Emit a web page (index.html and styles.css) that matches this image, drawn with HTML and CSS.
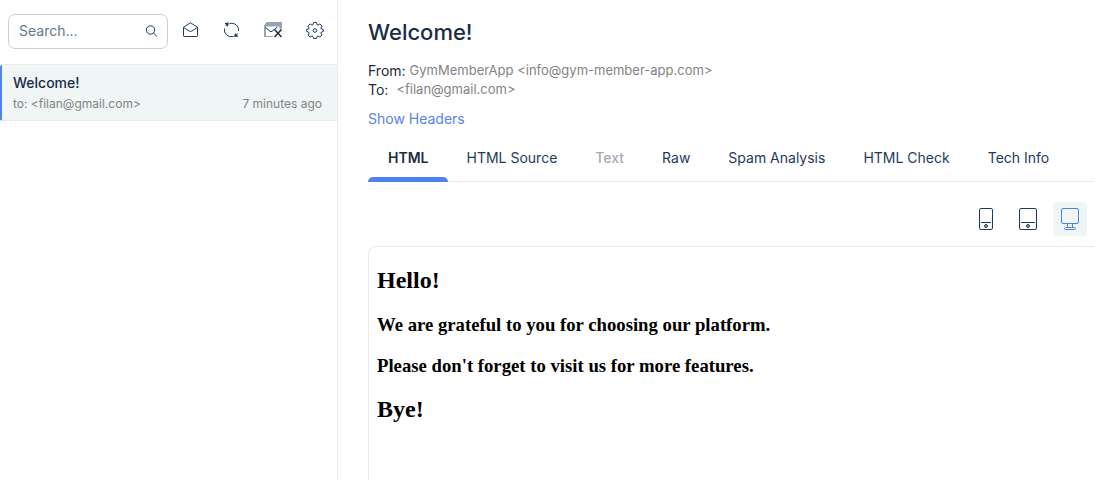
FILE: index.html
```html
<!DOCTYPE html>
<html lang="en">
<head>
<meta charset="utf-8">
<title>Inbox</title>
<link rel="stylesheet" href="styles.css">
</head>
<body>
<div class="app">
  <aside class="sidebar">
    <div class="toolbar">
      <label class="search">
        <input class="search-input" type="text" placeholder="Search..." aria-label="Search">
        <svg class="search-icon" width="14" height="14" viewBox="0 0 14 14"><circle cx="6.500" cy="6" r="4.200"/><path d="M9.500 9l3.500 3.700"/></svg>
      </label>
      <div class="actions">
        <button class="action" aria-label="Mark all as read">
          <svg width="18" height="18" viewBox="0 0 18 18"><path d="M1.500 6.200L8.500 1.800l7 4.400v8.600q0 .7-.7.7H2.200q-.7 0-.7-.7zM1.800 6.600L7 10q1.500.9 3 0l5.200-3.400"/></svg>
        </button>
        <button class="action" aria-label="Refresh">
          <svg width="18" height="18" viewBox="0 0 18 18"><path d="M6.500 2.700A6.800 6.800 0 0 1 15.500 10M1.500 7.500A6.800 6.800 0 0 0 10.500 15.300M2.500 5A6.800 6.800 0 0 1 4 3.500M14.500 12.500A6.800 6.800 0 0 1 13 14.500"/><path class="solid" d="M1.500 2L5.800 1.500 5 5.800zM15.500 15.500L11.200 16 12 12z"/></svg>
        </button>
        <button class="action" aria-label="Delete all">
          <svg width="20" height="18" viewBox="0 0 20 18"><path class="shade" d="M3.500 1H19V7L16.500 9V5.500H4L1 7V4.500z"/><path class="muted" d="M1.500 15.500h8.500"/><path class="shade" d="M1 6h2v10H1z"/><path d="M2.500 6.500L7 10.300q1 .7 2 0L14.500 6"/><path class="bold" d="M11.500 8.500l7 7.500M18.500 8.500l-7 7.500"/></svg>
        </button>
        <button class="action" aria-label="Settings">
          <svg width="18" height="18" viewBox="0 0 18 18"><path d="M7.500 1.500h3l.5 2.200 1 .4 1.900-1.200 2.100 2.200L14.900 7l.4 1 2 .5v2l-2 .6-.4 1 1.100 1.900-2.100 2.100-1.900-1.100-1 .4-.5 2.100h-3L7 15.400 6 15l-1.900 1.100L2 14l1.100-1.900-.4-1-2-.6v-2l2-.5.4-1L2 5.100l2.100-2.200L6 4.100l1-.4z"/><circle cx="9" cy="9.500" r="1.800"/></svg>
        </button>
      </div>
    </div>
    <a class="message" href="#message">
      <span class="message-subject">Welcome!</span>
      <span class="message-meta"><span>to: &lt;filan@gmail.com&gt;</span><time>7 minutes ago</time></span>
    </a>
  </aside>
  <main class="main" id="message">
    <h1 class="subject">Welcome!</h1>
    <div class="addresses">
      <div class="address"><span class="address-label">From:</span><span class="address-value">GymMemberApp &lt;info@gym-member-app.com&gt;</span></div>
      <div class="address address-to"><span class="address-label">To:</span><span class="address-value">&lt;filan@gmail.com&gt;</span></div>
    </div>
    <a class="headers-link" href="#headers">Show Headers</a>
    <div class="tabs" role="tablist">
      <button class="tab active" role="tab" aria-selected="true">HTML</button>
      <button class="tab" role="tab">HTML Source</button>
      <button class="tab" role="tab" disabled>Text</button>
      <button class="tab" role="tab">Raw</button>
      <button class="tab" role="tab">Spam Analysis</button>
      <button class="tab" role="tab">HTML Check</button>
      <button class="tab" role="tab">Tech Info</button>
    </div>
    <div class="devices">
      <button class="device" aria-label="Mobile view"><svg width="24" height="24" viewBox="0 0 24 24"><rect x="5.500" y="1.500" width="13" height="21" rx="1.500"/><path d="M7 15.500h10"/><circle class="dot" cx="12" cy="19" r="1.500"/></svg></button>
      <button class="device" aria-label="Tablet view"><svg width="24" height="24" viewBox="0 0 24 24"><rect x="3.500" y="1.500" width="17" height="21" rx="1.500"/><path d="M5 15.500h14"/><circle class="dot" cx="12" cy="19" r="1.500"/></svg></button>
      <button class="device selected" aria-label="Desktop view"><svg width="24" height="24" viewBox="0 0 24 24"><rect x="3.500" y="1.500" width="17" height="15" rx="1.500"/><path d="M9.500 17v3M14.500 17v3"/><rect x="6.500" y="20.500" width="11" height="2" rx="1"/></svg></button>
    </div>
    <article class="email">
      <h2>Hello!</h2>
      <h3>We are grateful to you for choosing our platform.</h3>
      <h3>Please don't forget to visit us for more features.</h3>
      <h2>Bye!</h2>
    </article>
  </main>
</div>
</body>
</html>
```
FILE: styles.css
```css
* { box-sizing: border-box; }
body {
  margin: 0;
  background: #fff;
  color: #1c2b42;
  font: 14px/20px Inter, "Liberation Sans", sans-serif;
}
button {
  border: 0;
  background: none;
  color: inherit;
  font: inherit;
  cursor: pointer;
}
a { color: inherit; text-decoration: none; }
svg {
  display: block;
  fill: none;
  stroke: #1f3a5c;
  stroke-width: 1;
}
.app { display: flex; min-height: 100vh; }

.sidebar { flex: 0 0 338px; border-right: 1px solid #ebebeb; }
.toolbar {
  display: flex;
  align-items: center;
  gap: 14px;
  height: 65px;
  padding: 0 13px 2px 8px;
  border-bottom: 1px solid #ebebeb;
}
.search {
  display: flex;
  align-items: center;
  width: 160px;
  height: 35px;
  padding: 0 9px 0 10px;
  border: 1px solid #cdced6;
  border-radius: 7px;
}
.search-input {
  flex: 1;
  min-width: 0;
  padding: 0;
  border: 0;
  outline: 0;
  background: none;
  color: inherit;
  font: inherit;
}
.search-input::placeholder { color: #64788c; opacity: 1; }
.search-icon { flex: none; }
.actions {
  display: flex;
  flex: 1;
  justify-content: space-between;
  padding-bottom: 2px;
}
.action { padding: 0; }
.solid { fill: #1f3a5c; stroke: none; }
.shade { fill: #98a4b5; stroke: none; }
.muted { stroke: #98a4b5; }
.bold { stroke: #1c2b42; stroke-width: 1.5; }

.message {
  display: flex;
  flex-direction: column;
  gap: 1px;
  padding: 8px 15px 6px 11px;
  border-left: 2px solid #4c83ee;
  border-bottom: 1px solid #e6eaea;
  border-radius: 2px 0 0 2px;
  background: #f0f6f6;
}
.message-subject { font-weight: 500; }
.message-meta {
  display: flex;
  justify-content: space-between;
  color: #838383;
  font-size: 12px;
}

.main {
  display: flex;
  flex: 1;
  flex-direction: column;
  min-width: 0;
  padding: 18px 4px 0 30px;
}
.subject { margin: 0; font-size: 22px; line-height: 28px; font-weight: 500; }
.addresses { margin-top: 15px; line-height: 19px; }
.address { display: flex; gap: 4px; }
.address-to { gap: 8px; }
.address-value { color: #838383; font-size: 13px; }
.headers-link { align-self: flex-start; margin-top: 10px; color: #5c82ec; }
.tabs { display: flex; margin-top: 8px; border-bottom: 1px solid #ebebeb; }
.tab {
  position: relative;
  height: 44px;
  padding: 0 19px 2px;
  color: #1f3a5c;
  white-space: nowrap;
}
.tab.active { padding-left: 20px; color: #1c2b42; font-weight: 600; }
.tab.active::after {
  content: "";
  position: absolute;
  inset: auto 0 -1px;
  height: 5px;
  border-radius: 5px 5px 0 0;
  background: #4c83ee;
}
.tab:disabled { color: #a5abb4; font-weight: 500; }
.devices {
  display: flex;
  justify-content: flex-end;
  gap: 8px;
  padding: 20px 7px 10px 0;
}
.device { width: 34px; height: 34px; padding: 5px; border-radius: 4px; }
.device.selected { background: #f0f6f6; }
.device.selected svg { stroke: #4c83ee; }
.dot { fill: #98a4b5; }

.email {
  flex: 1;
  padding: 0 8px;
  border: 1px solid #ebebeb;
  border-width: 1px 0 0 1px;
  border-radius: 8px 0 0 0;
  color: #000;
  font-family: "Liberation Serif", serif;
  font-size: 16px;
}
.email h2 { margin: 20px 0; line-height: 27px; }
.email h3 { margin: 20px 0; line-height: 21px; }
```
